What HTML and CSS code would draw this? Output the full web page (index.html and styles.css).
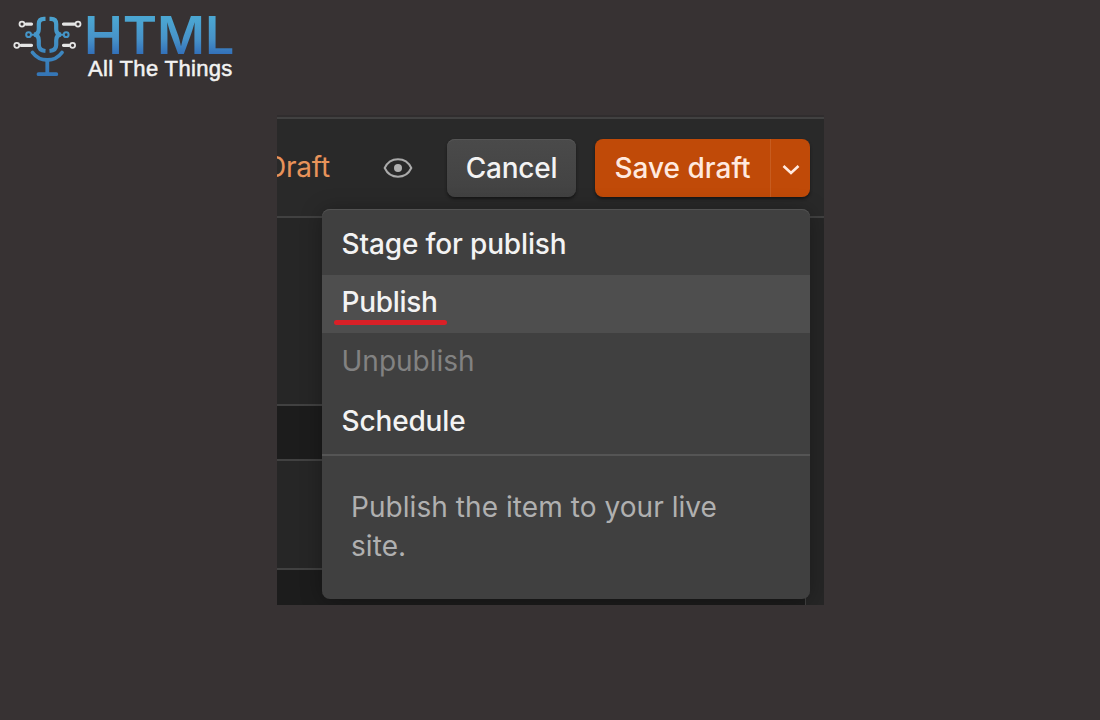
FILE: index.html
```html
<!DOCTYPE html>
<html lang="en">
<head>
    <meta charset="utf-8">
    <title>HTML All The Things</title>
    <link rel="stylesheet" href="styles.css">
</head>
<body>
    <header class="logo">
        <svg class="logo-icon" width="70" height="64" viewBox="12 14 70 64" fill="none">
            <defs>
                <linearGradient id="blue" gradientUnits="userSpaceOnUse" x1="0" y1="17" x2="0" y2="77">
                    <stop offset="0" stop-color="#4ba3d0" />
                    <stop offset="1" stop-color="#3474b5" />
                </linearGradient>
            </defs>
            <g stroke="url(#blue)" stroke-width="4.2">
                <path d="M45.5 18.8H44Q38.8 18.8 38.8 24V29Q38.8 34.4 34 34.700Q38.800 35 38.800 40.500V45Q38.800 50.500 45.500 51" />
                <path d="M49.500 18.800H51Q56.200 18.800 56.200 24V29Q56.200 34.400 61 34.700Q56.200 35 56.200 40.500V45Q56.200 50.500 49.500 51" />
                <path d="M32.500 52.500Q38 60 47.300 60Q56.500 60 62 52.500" stroke-linecap="round" stroke-width="3.800" />
                <path d="M47.300 60V74M38.500 74.200H56.300" stroke-linecap="round" stroke-width="3.800" />
            </g>
            <g stroke="url(#blue)" stroke-width="2">
                <circle cx="28.600" cy="34.700" r="2.400" />
                <circle cx="66.200" cy="34.700" r="2.400" />
                <path d="M31 34.700H36M59 34.700H64" />
            </g>
            <g stroke="#e4e4e4" stroke-width="1.800">
                <circle cx="22" cy="24.100" r="2.500" />
                <circle cx="78" cy="24.100" r="2.500" />
                <circle cx="16.800" cy="45.300" r="2.500" />
                <circle cx="72.600" cy="45.300" r="2.500" />
            </g>
            <path d="M26 24.100H31.500M63.500 24.100H74.500M21 45.300H31.500M63.500 45.300H69" stroke="#e4e4e4" stroke-width="3.200" stroke-linecap="round" />
        </svg>
        <div class="logo-text">
            <div class="logo-title">HTML</div>
            <div class="logo-sub">All The Things</div>
        </div>
    </header>

    <main class="panel">
        <div class="toolbar">
            <span class="status">Draft</span>
            <svg class="eye" width="30" height="22" viewBox="0 0 30 22" fill="none">
                <path d="M1.700 11C4.500 5 9.500 2.200 15 2.200S25.500 5 28.300 11C25.500 17 20.500 19.700 15 19.700S4.500 17 1.700 11Z" stroke="#aaa" stroke-width="2" />
                <circle cx="15" cy="11" r="4" fill="#b0b0b0" />
            </svg>
            <button class="btn cancel">Cancel</button>
            <div class="split">
                <button class="btn save">Save draft</button>
                <button class="btn arrow">
                    <svg width="18" height="12" viewBox="0 0 18 12" fill="none">
                        <path d="M1.500 2L9 9L16.500 2" stroke="#ffe9df" stroke-width="2.600" />
                    </svg>
                </button>
            </div>
        </div>
        <div class="block block-one"></div>
        <div class="block block-two"></div>
        <div class="block block-three"></div>
        <div class="block block-four"></div>

        <div class="menu">
            <div class="item stage">Stage for publish</div>
            <div class="item publish"><span class="marked">Publish</span></div>
            <div class="item unpublish">Unpublish</div>
            <div class="item schedule">Schedule</div>
            <p class="hint">Publish the item to your live site.</p>
        </div>
    </main>
</body>
</html>
```
FILE: styles.css
```css
* {
    box-sizing: border-box;
}

body {
    margin: 0;
    height: 720px;
    overflow: hidden;
    background-color: #373233;
    font-family: Inter, sans-serif;
    font-size: 28px;
}

.logo {
    display: flex;
    height: 115px;
    padding: 14px 0 0 12px;
}

.logo-icon {
    flex: none;
}

.logo-text {
    padding-left: 2px;
    margin-top: -2px;
    white-space: nowrap;
}

.logo-title {
    font-size: 52px;
    font-weight: 600;
    line-height: 45px;
    height: 45px;
    padding-top: 1px;
    background: linear-gradient(#4ba6d2 15%, #4792c8 60%, #326fb9 95%);
    -webkit-background-clip: text;
    background-clip: text;
    color: transparent;
}

.logo-sub {
    margin-left: 4px;
    font-family: "Liberation Sans", Arial, sans-serif;
    font-size: 22px;
    line-height: 24px;
    letter-spacing: 0.35px;
    color: #f2f2f2;
    -webkit-text-stroke: 0.5px #f2f2f2;
}

.panel {
    position: relative;
    width: 547px;
    height: 490px;
    margin-left: 277px;
    overflow: hidden;
    background-color: #262626;
}

.toolbar {
    display: flex;
    align-items: flex-start;
    height: 103px;
    padding-top: 19px;
    border-top: 2px solid #302d2e;
    border-bottom: 2px solid #414141;
    background-color: #292929;
    box-shadow: inset 0 2px #414141;
}

.status {
    width: 63px;
    margin-left: -11px;
    line-height: 62px;
    letter-spacing: -0.2px;
    color: #e8935a;
    white-space: nowrap;
}

.eye {
    margin: 21px 0 0 54px;
}

.btn {
    height: 58px;
    margin: 0;
    padding: 0;
    border: none;
    font: 500 28px/58px Inter, sans-serif;
    color: #f3f3f3;
    white-space: nowrap;
}

.cancel {
    width: 129px;
    margin: 3px 0 0 34px;
    border-radius: 8px;
    background: linear-gradient(#4a4a4a, #424242);
    box-shadow: inset 0 1px #555, 0 2px 3px #171717;
    letter-spacing: -0.2px;
}

.split {
    display: flex;
    margin: 3px 0 0 19px;
    border-radius: 8px;
    overflow: hidden;
    box-shadow: 0 2px 3px #171717;
}

.save {
    width: 175px;
    background-color: #c04a08;
    color: #ffe9df;
}

.arrow {
    display: flex;
    align-items: center;
    justify-content: center;
    width: 40px;
    padding-top: 3px;
    border-left: 1px solid #c75c20;
    background-color: #c04a08;
}

.block {
    width: 529px;
    border-bottom: 2px solid #414141;
}

.block-one {
    height: 188px;
}

.block-two {
    height: 55px;
    background-color: #1c1c1c;
}

.block-three {
    height: 109px;
}

.block-four {
    height: 35px;
    border-bottom: none;
    border-right: 1px solid #414141;
    background-color: #1c1c1c;
}

/* dropdown hangs over the blocks */
.menu {
    position: absolute;
    top: 94px;
    left: 45px;
    width: 488px;
    height: 390px;
    border-radius: 8px;
    background-color: #404040;
    box-shadow: inset 0 1px #525252, 0 2px 22px rgba(0, 0, 0, 0.3);
    color: #f3f3f3;
}

.item {
    height: 59px;
    padding-left: 19.5px;
    line-height: 55px;
    font-weight: 500;
    letter-spacing: -0.15px;
}

.stage {
    height: 66px;
    padding-top: 8px;
}

.publish {
    height: 58px;
    background-color: #4e4e4e;
    letter-spacing: -0.3px;
}

.marked {
    position: relative;
}

/* red underline */
.marked::after {
    content: "";
    position: absolute;
    left: -8px;
    bottom: -6px;
    width: 113px;
    height: 5px;
    border-radius: 3px;
    background-color: #da2027;
}

.unpublish {
    padding-top: 1px;
    font-weight: 400;
    letter-spacing: 0;
    color: #828282;
}

.schedule {
    height: 64px;
    padding-top: 2px;
    border-bottom: 2px solid #555;
}

.hint {
    margin: 0;
    padding: 32px 60px 0 29px;
    line-height: 39px;
    letter-spacing: 0.06px;
    color: #b0b0b0;
}
```
